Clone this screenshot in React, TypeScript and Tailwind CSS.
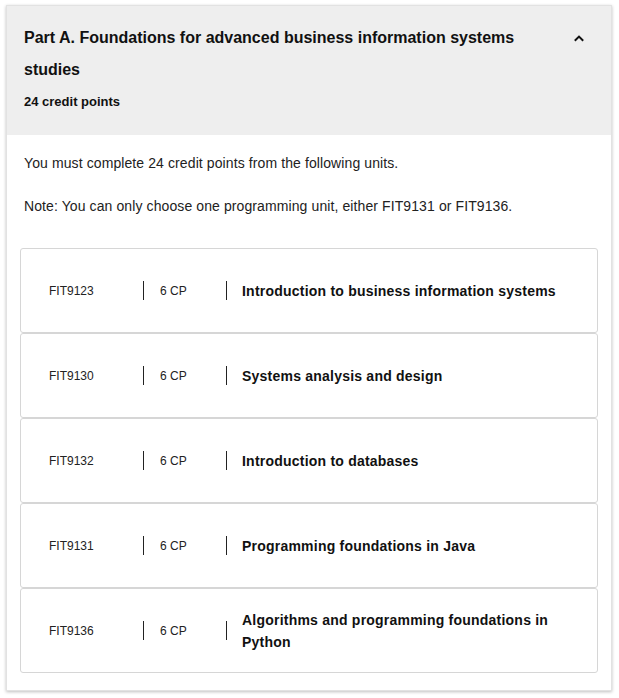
import React from "react";

const units = [
  { code: "FIT9123", cp: "6 CP", title: "Introduction to business information systems" },
  { code: "FIT9130", cp: "6 CP", title: "Systems analysis and design" },
  { code: "FIT9132", cp: "6 CP", title: "Introduction to databases" },
  { code: "FIT9131", cp: "6 CP", title: "Programming foundations in Java" },
  { code: "FIT9136", cp: "6 CP", title: "Algorithms and programming foundations in Python" },
];

export default function App() {
  return (
    <div className="w-[619px] h-[698px] bg-white pt-[5px] pl-[6px]" style={{ fontFamily: '"Liberation Sans", Arial, sans-serif' }}>
      <div className="w-[606px] bg-white border border-[#e2e2e2] shadow-[0_1px_3px_rgba(0,0,0,0.25)]">
        <div className="bg-[#eeeeee] pl-[17px] pr-[26px] pt-[16px] pb-[23px] flex items-start justify-between">
          <div>
            <div className="text-[16px] font-bold leading-[32px] text-[#111] w-[500px]">
              Part A. Foundations for advanced business information systems studies
            </div>
            <div className="text-[13px] font-bold leading-[20px] text-[#111] mt-[6px]">24 credit points</div>
          </div>
          <svg width="12" height="9" viewBox="0 0 12 9" className="mt-[12px]">
            <path d="M1.8 6.8 L6 2.6 L10.2 6.8" fill="none" stroke="#111" strokeWidth="2" />
          </svg>
        </div>
        <div className="pt-[18px] pb-[17px]">
          <p className="px-[17px] text-[14px] leading-[20px] text-[#222] tracking-[0.1px]">You must complete 24 credit points from the following units.</p>
          <p className="px-[17px] mt-[23px] text-[14px] leading-[20px] text-[#222] tracking-[0.1px]">Note: You can only choose one programming unit, either FIT9131 or FIT9136.</p>
          <div className="mt-[32px] px-[13px] flex flex-col">
            {units.map((u) => (
              <div key={u.code} className="h-[85px] border border-[#d6d6d6] rounded-[3px] flex items-center pl-[28px] pr-[20px]">
                <div className="w-[94px] text-[12px] leading-[20px] text-[#222]">{u.code}</div>
                <div className="border-l border-[#222] h-[19px]" />
                <div className="w-[82px] pl-[16px] text-[12px] leading-[20px] text-[#222]">{u.cp}</div>
                <div className="border-l border-[#222] h-[19px]" />
                <div className="pl-[15px] text-[14px] font-bold leading-[22px] text-[#111] tracking-[0.22px] w-[330px]">{u.title}</div>
              </div>
            ))}
          </div>
        </div>
      </div>
    </div>
  );
}
